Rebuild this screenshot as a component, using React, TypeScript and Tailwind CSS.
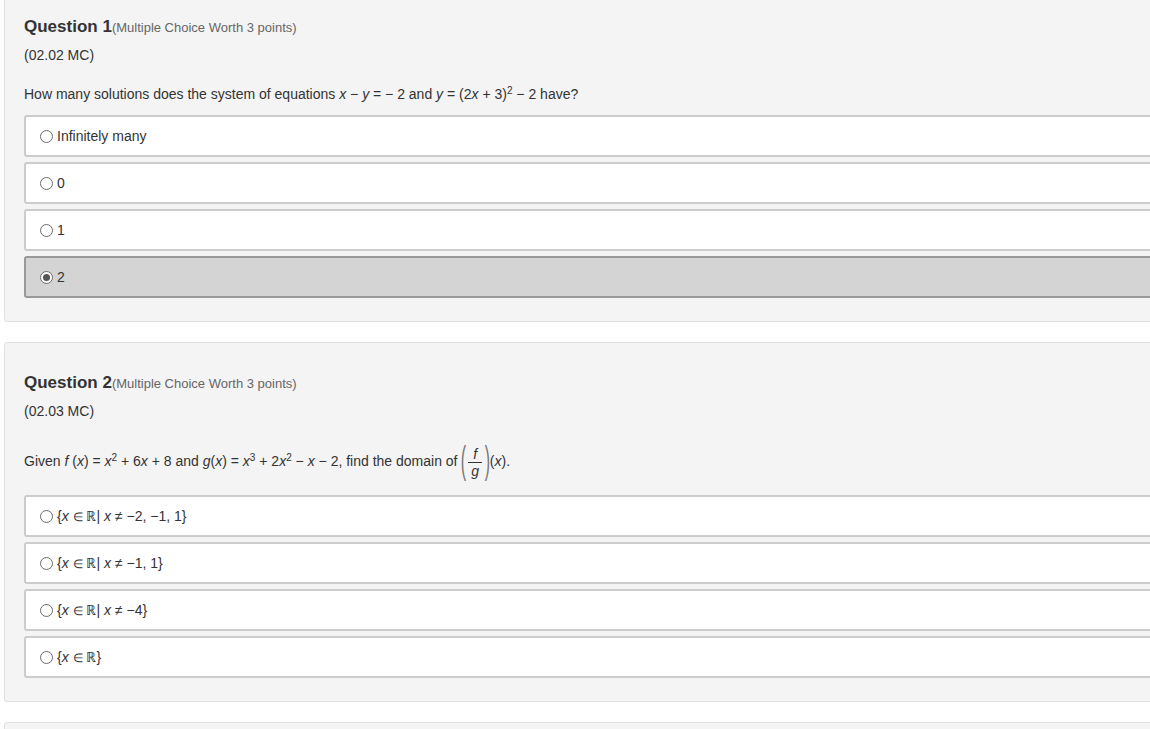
import React from 'react';

type Opt = { label: React.ReactNode; selected?: boolean };

const Radio = ({ checked }: { checked?: boolean }) => (
  <span className="inline-flex items-center justify-center w-[13px] h-[13px] rounded-full border border-[#6b6b6b] bg-white mr-[4px] shrink-0">
    {checked && <span className="w-[7px] h-[7px] rounded-full bg-[#555]" />}
  </span>
);

const Option = ({ label, selected }: Opt) => (
  <div
    className={
      'h-[42px] flex items-center pl-[14px] rounded-[3px] border-2 text-[14px] text-[#333] ' +
      (selected ? 'bg-[#d4d4d4] border-[#999]' : 'bg-white border-[#ccc]')
    }
  >
    <Radio checked={selected} />
    <span>{label}</span>
  </div>
);

const I = ({ children }: { children: React.ReactNode }) => <i className="italic">{children}</i>;
const Sup = ({ children }: { children: React.ReactNode }) => <sup className="text-[10px]">{children}</sup>;

const Panel = ({
  num,
  code,
  question,
  qClass,
  options,
}: {
  num: number;
  code: string;
  question: React.ReactNode;
  qClass: string;
  options: Opt[];
}) => (
  <div className="w-[1200px] ml-[4px] bg-[#f4f4f4] border border-[#e0e0e0] rounded-[3px] pl-[19px] pt-[27px] pb-[23px]">
    <div className="h-[22px] flex items-baseline">
      <span className="text-[17px] font-bold text-[#333]">Question {num}</span>
      <span className="text-[13px] text-[#666]">(Multiple Choice Worth 3 points)</span>
    </div>
    <div className="mt-[10px] h-[18px] leading-[18px] text-[14px] text-[#333]">({code} MC)</div>
    <div className={qClass}>{question}</div>
    <div className="flex flex-col gap-[5px]">
      {options.map((o, i) => (
        <Option key={i} {...o} />
      ))}
    </div>
  </div>
);

const Paren = ({ c }: { c: string }) => (
  <span className="text-[38px] font-extralight leading-none text-[#777] scale-x-[0.42] -mx-[5px] -mt-[4px]">{c}</span>
);

const Fraction = () => (
  <span className="inline-flex items-center ml-[4px] mr-[1px] align-middle">
    <Paren c="(" />
    <span className="inline-flex flex-col items-center text-[14px] leading-[16px] px-[4px]">
      <span className="italic">f</span>
      <span className="w-[14px] border-t border-[#333]" />
      <span className="italic">g</span>
    </span>
    <Paren c=")" />
  </span>
);

const Elem = () => <span className="text-[12px]">∈</span>;

const SetOpt = ({ rest }: { rest?: string }) => (
  <span>
    {'{'}
    <I>x</I> <Elem /> ℝ{rest !== undefined ? <>| <I>x</I> ≠ {rest}</> : null}
    {'}'}
  </span>
);

export default function App() {
  return (
    <div
      className="w-[1150px] h-[729px] overflow-hidden bg-white"
      style={{ fontFamily: '"Liberation Sans", Arial, sans-serif' }}
    >
      <div className="-mt-[14px] flex flex-col gap-[20px]">
        <Panel
          num={1}
          code="02.02"
          qClass="mt-[21px] mb-[12px] h-[18px] leading-[18px] text-[14px] text-[#333]"
          question={
            <>
              How many solutions does the system of equations <I>x</I> − <I>y</I> = − 2 and <I>y</I> = (2<I>x</I> + 3)
              <Sup>2</Sup> − 2 have?
            </>
          }
          options={[
            { label: 'Infinitely many' },
            { label: '0' },
            { label: '1' },
            { label: '2', selected: true },
          ]}
        />
        <Panel
          num={2}
          code="02.03"
          qClass="mt-[24px] mb-[15px] h-[36px] flex items-center text-[14px] text-[#333]"
          question={
            <span>
              Given <I>f</I> (<I>x</I>) = <I>x</I>
              <Sup>2</Sup> + 6<I>x</I> + 8 and <I>g</I>(<I>x</I>) = <I>x</I>
              <Sup>3</Sup> + 2<I>x</I>
              <Sup>2</Sup> − <I>x</I> − 2, find the domain of
              <Fraction />(<I>x</I>).
            </span>
          }
          options={[
            { label: <SetOpt rest="−2, −1, 1" /> },
            { label: <SetOpt rest="−1, 1" /> },
            { label: <SetOpt rest="−4" /> },
            { label: <SetOpt /> },
          ]}
        />
        <div className="w-[1200px] ml-[4px] h-[60px] bg-[#f4f4f4] border border-[#e0e0e0] rounded-[3px]" />
      </div>
    </div>
  );
}
